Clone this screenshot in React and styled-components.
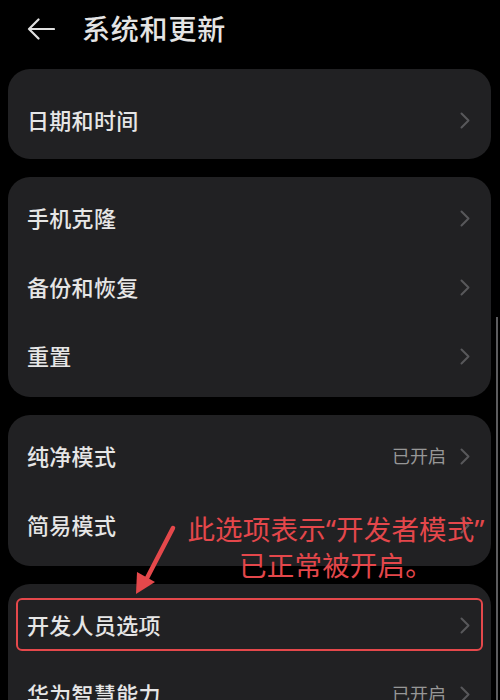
import React from "react"
import styled, { createGlobalStyle } from 'styled-components'

const Global = createGlobalStyle`
  body{
    margin: 0;
    background: #000;
    font-family: 'Noto Sans CJK SC', 'Noto Sans', sans-serif;
  }
`

const Screen = styled.div`
  position: relative;
  width: 500px;
  height: 700px;
  overflow: hidden;
  background: #000;
`

const Header = styled.div`
  height: 58px;
  display: flex;
  align-items: center;
  padding-left: 27px;
  gap: 27px;
  h1{
    margin: 0 0 2px;
    color: #e4e4e4;
    font-size: 28px;
    font-weight: 500;
    letter-spacing: 0.8px;
    line-height: 1;
  }
`

const List = styled.div`
  display: flex;
  flex-direction: column;
  gap: 18px;
  padding: 11px 9px 0 8px;
`

const Card = styled.div`
  background: #212123;
  border-radius: 22px;
  padding: ${x => x.top || 6.5}px 0 ${x => x.bottom || 6.5}px;
`

const Row = styled.div`
  position: relative;
  height: 69px;
  display: flex;
  align-items: center;
  justify-content: space-between;
  padding: 0 21px 0 19px;
  > span{
    color: #e6e6e6;
    font-size: 22px;
    font-weight: 500;
    letter-spacing: 0.3px;
    line-height: 1;
    padding-bottom: 3px;
  }
`

const Right = styled.div`
  display: flex;
  align-items: center;
  gap: 14px;
  color: #979797;
  font-size: 18px;
  line-height: 1;
  > span{ padding-bottom: 2px; }
`

const Highlight = styled.div`
  position: absolute;
  left: 8px;
  right: 8px;
  top: 7.5px;
  bottom: 8.5px;
  border: 2.5px solid #e5484b;
  border-radius: 6px;
`

const Note = styled.div`
  position: absolute;
  left: 186px;
  top: 511px;
  width: 300px;
  text-align: center;
  white-space: nowrap;
  color: #e4474b;
  font-size: 27.5px;
  letter-spacing: 0.2px;
  line-height: 34px;
`

const Quote = styled.span`
  font-family: 'Noto Sans', sans-serif;
`

const Pointer = styled.svg`
  position: absolute;
  left: 128px;
  top: 522px;
`

const Scroll = styled.div`
  position: absolute;
  right: 2px;
  top: 317px;
  bottom: 0;
  width: 2px;
  background: #5c5c5e;
`

const Chevron = () =>
  <svg width="10" height="17" viewBox="0 0 10 17">
    <path d="M1.5 1.5 L8.5 8.5 L1.5 15.5" fill="none" stroke="#58585b" strokeWidth="2" strokeLinecap="round" strokeLinejoin="round" />
  </svg>

const Item = ({ label, value, mark }) =>
  <Row>
    <span>{label}</span>
    <Right>{value && <span>{value}</span>}<Chevron /></Right>
    {mark && <Highlight />}
  </Row>

export default function App() {
  return (
    <Screen>
      <Global />
      <Header>
        <svg width="28" height="22" viewBox="0 0 28 22">
          <path d="M27 11 H2 M11.5 1.5 L2 11 L11.5 20.5" fill="none" stroke="#e0e0e0" strokeWidth="2.2" strokeLinecap="round" strokeLinejoin="round" />
        </svg>
        <h1>系统和更新</h1>
      </Header>

      <List>
        <Card top={16.5} bottom={4.5}>
          <Item label="日期和时间" />
        </Card>
        <Card>
          <Item label="手机克隆" />
          <Item label="备份和恢复" />
          <Item label="重置" />
        </Card>
        <Card>
          <Item label="纯净模式" value="已开启" />
          <Item label="简易模式" />
        </Card>
        <Card>
          <Item label="开发人员选项" mark />
          <Item label="华为智慧能力" value="已开启" />
        </Card>
      </List>

      <Note>此选项表示<Quote>“</Quote>开发者模式<Quote>”</Quote><br />已正常被开启。</Note>
      <Pointer width="52" height="76" viewBox="0 0 52 76">
        <path d="M45 6 L18 58" stroke="#e5484b" strokeWidth="4.5" strokeLinecap="round" />
        <path d="M8 72 L9 50 L27 60 Z" fill="#e5484b" />
      </Pointer>
      <Scroll />
    </Screen>
  )
}
